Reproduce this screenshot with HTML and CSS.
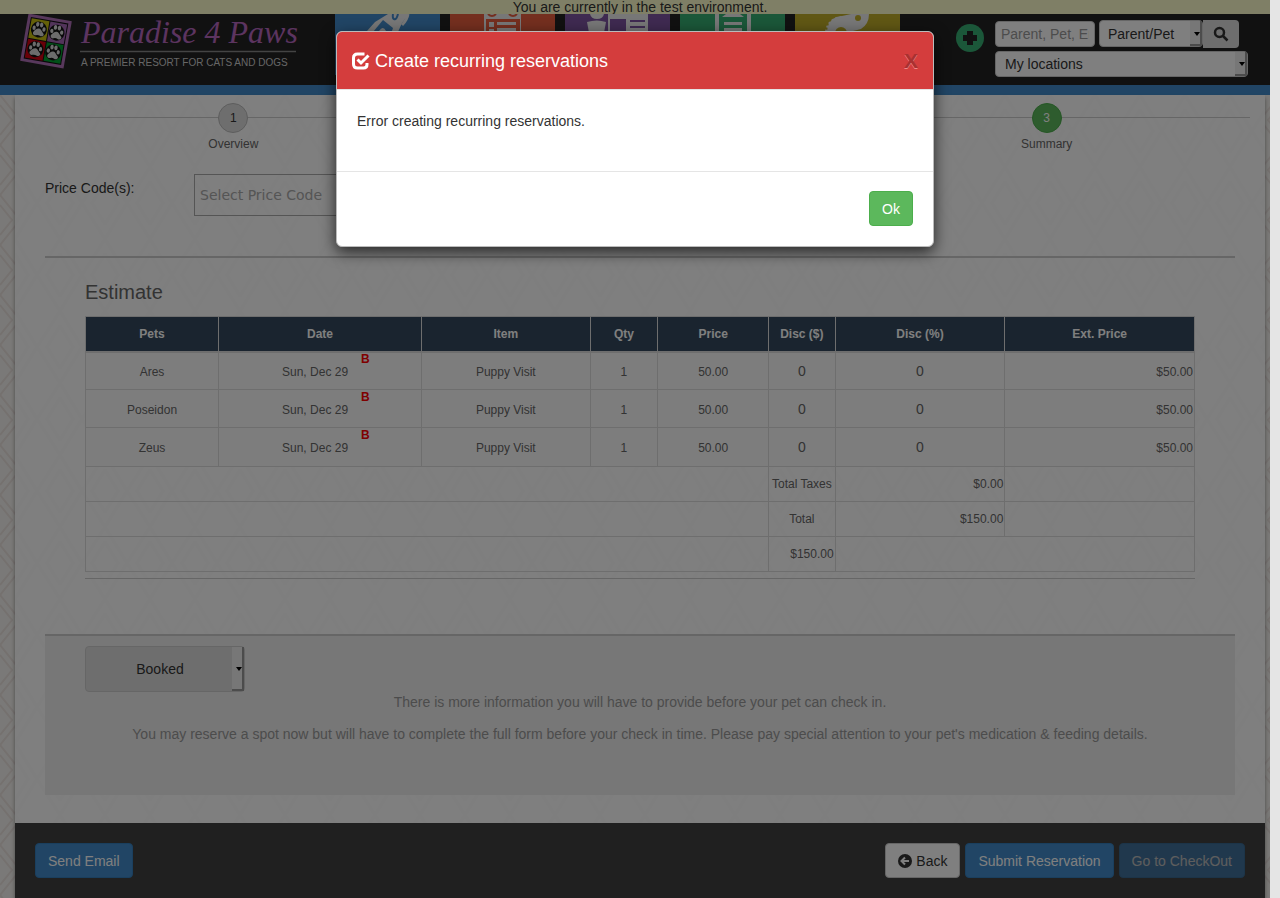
FILE: index.html
```html
<!DOCTYPE html>
<html lang="en">
<head>
<meta charset="utf-8">
<title>Paradise 4 Paws - Reservation</title>
<link rel="stylesheet" href="styles.css">
</head>
<body>
<div class="page">
  <div class="env-banner">You are currently in the test environment.</div>
  <header class="topbar">
    <a class="logo" href="#" aria-label="Paradise 4 Paws">
      <svg viewBox="0 0 300 62" width="300" height="62">
        <defs>
          <g id="paw" fill="#d8d8d8">
            <circle r="8" fill="#111"/>
            <path d="M0-1C2-1 3 1 5 3S4 7 2 6Q0 5-2 6C-4 7-6 5-5 3S-2-1 0-1Z"/>
            <ellipse cx="-5" cy="-1" rx="1.6" ry="2.2"/><ellipse cx="-2" cy="-5" rx="1.7" ry="2.4"/>
            <ellipse cx="2" cy="-5" rx="1.7" ry="2.4"/><ellipse cx="5" cy="-1" rx="1.6" ry="2.2"/>
          </g>
        </defs>
        <g transform="translate(26 27) rotate(10)">
          <rect x="-22" y="-24" width="44" height="48" fill="#b070b8"/>
          <rect x="-19" y="-21" width="38" height="42" fill="#111"/>
          <rect x="-18" y="-20" width="18" height="20" fill="#c8c010"/>
          <rect x="1" y="-20" width="17" height="20" fill="#a468b4"/>
          <rect x="-18" y="1" width="18" height="19" fill="#d00010"/>
          <rect x="1" y="1" width="17" height="19" fill="#00a030"/>
          <use href="#paw" x="-9" y="-10"/><use href="#paw" x="9" y="-10"/>
          <use href="#paw" x="-9" y="10"/><use href="#paw" x="9" y="10"/>
        </g>
        <text class="logo-name" x="61" y="29">Paradise 4 Paws</text>
        <path d="M60 37.500H276" stroke="#888" stroke-width="1.500"/>
        <text class="logo-tag" x="61" y="52">A PREMIER RESORT FOR CATS AND DOGS</text>
      </svg>
    </a>
    <nav class="tiles" aria-label="Main">
      <a class="tile tile-blue" href="#" aria-label="Check in"><svg viewBox="0 0 105 61">
        <path d="M32 17L40 8 53 0H74L67 9 62 20H32Z"/><path class="cut" d="M38 18L48 6 58 14 56 20H38Z"/>
        <path class="ring" d="M58 0C57 6 61 8 63 0"/>
        <path class="arc" d="M73 0Q72 6 67 11"/><path d="M44 17Q48 11 51 17V20H44Z"/></svg></a>
      <a class="tile tile-orange" href="#" aria-label="Calendar"><svg viewBox="0 0 105 61">
        <path d="M34 0H71V50H34Z"/><path class="ring" d="M38 0Q42 4 46 0M59 0Q63 4 67 0"/>
        <path class="cut" d="M36 5H70V48H36Z"/><path d="M39 8H44V13H39ZM47 8H66V11H47ZM47 14H66V17H47ZM39 15H44V20H39Z"/></svg></a>
      <a class="tile tile-purple" href="#" aria-label="Customers"><svg viewBox="0 0 105 61">
        <path d="M25 0H39Q38 5 32 5T25 0ZM22 8Q32 5 41 8L38 24H25ZM43 0H83V40H43Z"/>
        <path class="cut" d="M45 5H61V30H45ZM65 6H80V8H65ZM65 12H80V14H65Z"/></svg></a>
      <a class="tile tile-green" href="#" aria-label="Reports"><svg viewBox="0 0 105 61">
        <path d="M35 0H71V50H35Z"/><path class="cut" d="M39 0H67V46H39Z"/>
        <path d="M46 0H60L64 3H42ZM44 8H62V11H44ZM44 14H62V17H44Z"/></svg></a>
      <a class="tile tile-olive" href="#" aria-label="Settings"><svg viewBox="0 0 105 61">
        <circle class="teeth" cx="47" cy="19" r="15"/><path d="M32 20Q32 3 47 2L56 0H74Q74 10 66 15L58 17 50 20Z"/>
        <circle class="cut" cx="63" cy="4" r="3"/><circle class="cut" cx="46" cy="19" r="6"/></svg></a>
    </nav>
    <div class="tools">
      <button class="add" type="button" aria-label="Add">
        <svg viewBox="0 0 28 28"><path d="M11 7h6v4h4v6h-4v4h-6v-4H7v-6h4z"/></svg>
      </button>
      <form class="search">
        <div class="search-row">
          <input class="field query" type="text" placeholder="Parent, Pet, Email" aria-label="Search text">
          <span class="pick kind"><select class="field" aria-label="Search type"><option>Parent/Pet</option></select></span>
          <button class="go" type="button" aria-label="Search">
            <svg viewBox="0 0 16 16"><circle cx="6.500" cy="6.500" r="4.500"/><path d="M10 10l4.500 4.500"/></svg>
          </button>
        </div>
        <span class="pick place"><select class="field" aria-label="Location"><option>My locations</option></select></span>
      </form>
    </div>
  </header>

  <div class="backdrop-pattern">
  <main class="sheet">
    <ol class="steps">
      <li class="step"><span class="dot">1</span>Overview</li>
      <li class="step"><span class="dot">2</span>Details</li>
      <li class="step done"><span class="dot">3</span>Summary</li>
    </ol>

    <div class="price-code">
      <label for="code">Price Code(s):</label>
      <input id="code" type="text" placeholder="Select Price Code">
    </div>

    <section class="estimate">
      <h2>Estimate</h2>
      <table>
        <colgroup><col class="c-pets"><col class="c-date"><col class="c-item"><col class="c-qty"><col class="c-price"><col class="c-disc"><col class="c-pct"><col class="c-ext"></colgroup>
        <thead>
          <tr><th>Pets</th><th>Date</th><th>Item</th><th>Qty</th><th>Price</th><th>Disc ($)</th><th>Disc (%)</th><th>Ext. Price</th></tr>
        </thead>
        <tbody>
          <tr class="line"><td>Ares</td><td><span class="date">Sun, Dec 29<b>B</b></span></td><td>Puppy Visit</td><td>1</td><td>50.00</td><td class="num">0</td><td class="num">0</td><td class="money">$50.00</td></tr>
          <tr class="line"><td>Poseidon</td><td><span class="date">Sun, Dec 29<b>B</b></span></td><td>Puppy Visit</td><td>1</td><td>50.00</td><td class="num">0</td><td class="num">0</td><td class="money">$50.00</td></tr>
          <tr class="line last"><td>Zeus</td><td><span class="date">Sun, Dec 29<b>B</b></span></td><td>Puppy Visit</td><td>1</td><td>50.00</td><td class="num">0</td><td class="num">0</td><td class="money">$50.00</td></tr>
          <tr><td colspan="5"></td><td>Total Taxes</td><td class="money">$0.00</td><td></td></tr>
          <tr><td colspan="5"></td><td>Total</td><td class="money">$150.00</td><td></td></tr>
          <tr><td colspan="5"></td><td class="money">$150.00</td><td colspan="2"></td></tr>
        </tbody>
      </table>
    </section>

    <section class="notice">
      <span class="pick status"><select aria-label="Reservation status"><option>Booked</option></select></span>
      <p>There is more information you will have to provide before your pet can check in.</p>
      <p>You may reserve a spot now but will have to complete the full form before your check in time. Please pay special attention to your pet's medication &amp; feeding details.</p>
    </section>

    <footer class="actions">
      <button class="btn primary" type="button">Send Email</button>
      <div class="right">
        <button class="btn plain" type="button"><svg viewBox="0 0 14 14"><circle cx="7" cy="7" r="7"/><path d="M11 7H4M7 3.500L3.500 7 7 10.500"/></svg>Back</button>
        <button class="btn primary" type="button">Submit Reservation</button>
        <button class="btn primary faded" type="button">Go to CheckOut</button>
      </div>
    </footer>
  </main>
  </div>

  <div class="overlay">
    <div class="modal" role="dialog" aria-labelledby="modal-title">
      <div class="modal-head">
        <svg viewBox="0 0 18 18"><path class="box" d="M12.500 2H5.500Q1.500 2 1.500 6V12Q1.500 16 5.500 16H11.500Q15 16 15 12.500V11"/><path class="tick" d="M5.500 7.500L9 11 16.500 3.500"/></svg>
        <h1 id="modal-title">Create recurring reservations</h1>
        <button class="close" type="button">X</button>
      </div>
      <div class="modal-body">Error creating recurring reservations.</div>
      <div class="modal-foot"><button class="btn ok" type="button">Ok</button></div>
    </div>
  </div>
</div>
<div class="scrollbar"></div>
</body>
</html>
```
FILE: styles.css
```css
* { box-sizing: border-box; }
body {
  margin: 0;
  min-height: 100vh;
  display: grid;
  grid-template-columns: minmax(0, 1fr) 10px;
  font: 14px/20px "Liberation Sans", Arial, sans-serif;
  color: #333;
}
input, select, button { font: inherit; color: inherit; margin: 0; }
.page { position: relative; display: flex; flex-direction: column; }
.scrollbar { background: #e5e5e5; }

.env-banner {
  padding-left: 10px;
  background: #ffffcc;
  text-align: center;
  line-height: 14px;
}
.topbar {
  display: flex;
  align-items: flex-start;
  height: 81px;
  background: #222;
  border-bottom: 10px solid #428bca;
}
.logo { width: 315px; margin-left: 20px; flex: none; }
.logo svg { display: block; }
.logo-name { font: italic 32px "Liberation Serif", serif; fill: #b868c0; }
.logo-tag { font: 10px "Liberation Sans", sans-serif; fill: #ccc; }
.tiles { display: flex; gap: 10px; flex: none; }
.tile { width: 105px; height: 61px; background: var(--tint); }
.tile svg { display: block; fill: #eee; }
.tile .cut { fill: var(--tint); }
.tile .ring { fill: none; stroke: var(--tint); stroke-width: 2; }
.tile .arc { fill: none; stroke: #eee; stroke-width: 3; }
.tile .teeth { fill: none; stroke: #eee; stroke-width: 4; stroke-dasharray: 2 2; }
.tile-blue { --tint: #428bca; }
.tile-orange { --tint: #e95f3f; }
.tile-purple { --tint: #7f55a3; }
.tile-green { --tint: #37ae73; }
.tile-olive { --tint: #c0ae28; }

.tools { display: flex; gap: 11px; margin: 6px 22px 0 auto; }
.add {
  width: 28px; height: 28px; margin-top: 4px; padding: 0;
  border: 0; border-radius: 50%; background: #37ae73;
}
.add svg { display: block; fill: #222; }
.search { width: 253px; display: grid; gap: 3px; }
.search-row { display: flex; height: 28px; }
.field {
  width: 100%; height: 27px;
  padding: 0 8px;
  border: 1px solid #ccc; border-radius: 4px;
  background: #fff;
}
.query { width: 100px; height: 26px; margin: 1px 4px 0 0; padding: 0 5px; }
.query::placeholder { color: #999; }
.pick { position: relative; display: block; }
.pick select { appearance: none; display: block; }
.pick::after {
  content: "";
  position: absolute; top: 1px; right: 1px; bottom: 1px;
  width: 10px;
  border: solid #999; border-width: 0 2px 2px 0;
  background: #eee;
}
.pick::before {
  content: "";
  position: absolute; z-index: 1; top: 50%; right: 3px;
  margin-top: -2px;
  border: 3px solid transparent; border-top: 4px solid #000; border-bottom: 0;
}
.kind { width: 104px; height: 27px; }
.go {
  width: 36px; height: 28px; padding: 0;
  display: grid; place-items: center;
  border: 0; border-radius: 0 4px 4px 0; background: #ddd;
}
.go svg { width: 16px; height: 16px; fill: none; stroke: #333; stroke-width: 2.5; }
.place { height: 26px; }
.place .field { height: 26px; padding: 0 9px; }

.backdrop-pattern {
  flex: 1;
  display: flex;
  padding: 0 5px 0 15px;
  background: #f5f3f0 url("data:image/svg+xml,%3Csvg xmlns='http://www.w3.org/2000/svg' width='40' height='50'%3E%3Cpath d='M0 0L20 25 0 50M40 0L20 25 40 50M0 10L12 25 0 40M40 10L28 25 40 40' fill='none' stroke='%23eae2de' stroke-width='2'/%3E%3C/svg%3E");
}
.sheet {
  flex: 1;
  min-width: 0;
  display: flex;
  flex-direction: column;
  background: #fefefe url("data:image/svg+xml,%3Csvg xmlns='http://www.w3.org/2000/svg' width='45' height='72'%3E%3Cpath d='M0 0L22 36 0 72M45 0L22 36 45 72M0 15L13 36 0 57M45 15L32 36 45 57' fill='none' stroke='%23fcfcfc' stroke-width='3'/%3E%3C/svg%3E");
  box-shadow: 0 3px 4px rgba(0, 0, 0, 0.4);
}
.steps {
  display: grid; grid-template-columns: repeat(3, 1fr);
  margin: 0 15px; padding: 8px 0 0;
  list-style: none;
  background: linear-gradient(#ccc, #ccc) no-repeat 0 22px / 100% 1px;
}
.step { display: grid; justify-items: center; font-size: 12px; line-height: 22px; color: #666; }
.dot {
  width: 30px; height: 30px;
  border: 1px solid #bbb; border-radius: 15px;
  background: #ddd; color: #333;
  line-height: 28px; text-align: center;
}
.done .dot { background: #5cb85c; border-color: #4cae4c; color: #fff; }
.price-code {
  display: grid; grid-template-columns: 149px 400px;
  margin: 19px 30px 0; padding-bottom: 40px;
  border-bottom: 2px solid #ccc;
}
.price-code label { padding-top: 4px; }
.price-code input {
  height: 42px; padding: 0 5px;
  border: 1px solid #aaa; background: transparent;
  font-family: "DejaVu Sans", sans-serif;
}
.price-code input::placeholder { color: #aaa; }

.estimate {
  margin: 22px 70px 0; padding-bottom: 6px;
  border-bottom: 1px solid #ccc;
}
.estimate h2 { margin: 0 0 12px; font-size: 20px; line-height: 24px; font-weight: 400; color: #666; }
table { width: 100%; table-layout: fixed; border-collapse: collapse; font-size: 12px; color: #666; }
th, td { padding: 0 1px; border: 1px solid #ddd; text-align: center; }
th { height: 35px; background: #34495e; border-bottom: 2px solid #ddd; color: #fff; }
td { height: 35px; }
.line td { height: 38px; padding-top: 2px; background: #fbfbfb; }
.last td { height: 39px; }
.c-pets { width: 12%; } .c-date { width: 18.3%; } .c-item { width: 15.2%; } .c-qty { width: 6.1%; }
.c-price { width: 10%; } .c-disc { width: 6%; } .c-pct { width: 15.3%; } .c-ext { width: 17.1%; }
td.money { text-align: right; }
.line td.num { padding-top: 0; font-size: 14px; }
.date { position: relative; display: inline-block; left: -5px; }
.date b { position: absolute; left: 100%; top: -13px; margin-left: 13px; color: #f00; }

.notice {
  min-height: 161px;
  margin: 55px 30px 0; padding: 10px 40px;
  border-top: 2px solid #ccc;
  background: #eee;
  color: #999; text-align: center;
}
.status { width: 160px; color: #333; }
.status select {
  width: 100%; height: 46px; padding: 0 10px 0 0;
  border: 1px solid #ccc; border-radius: 4px; background: #ddd;
  text-align-last: center;
}
.notice p { margin: 0 0 12px; }
.actions {
  display: flex; justify-content: space-between; align-items: flex-start;
  margin-top: 28px; padding: 20px; flex: 1;
  background: #404040;
}
.right { display: flex; gap: 5px; }
.btn {
  height: 35px; padding: 0 12px;
  border: 1px solid transparent; border-radius: 4px;
}
.primary { background: #428bca; border-color: #357ebd; color: #fff; }
.faded { opacity: 0.65; }
.plain { display: flex; align-items: center; gap: 4px; background: #fff; border-color: #ccc; }
.plain svg { width: 14px; height: 14px; fill: #333; }
.plain path { fill: none; stroke: #fff; stroke-width: 2; }
.ok { background: #5cb85c; border-color: #4cae4c; color: #fff; }

.overlay {
  position: absolute; inset: 0; z-index: 5;
  padding: 31px 0;
  background: rgba(0, 0, 0, 0.5);
}
.modal {
  width: 598px; max-width: 100%; margin: 0 auto;
  border: 1px solid #bbb; border-radius: 6px;
  background: #fff;
  box-shadow: 0 5px 15px rgba(0, 0, 0, 0.7);
}
.modal-head {
  display: flex; align-items: center; gap: 5px;
  height: 58px; padding: 0 15px;
  background: #d43d3d; border-bottom: 1px solid #e5e5e5; border-radius: 5px 5px 0 0;
  color: #fff;
}
.modal-head svg { width: 18px; height: 18px; fill: none; stroke: #fff; stroke-width: 3; }
.modal-head h1 { margin: 0; font-size: 18px; font-weight: 400; }
.close {
  margin-left: auto; padding: 0; border: 0; background: none;
  font-size: 21px; font-weight: 700; color: #a93131; text-shadow: 0 1px 0 #e88;
}
.modal-body { min-height: 81px; padding: 21px 20px; }
.modal-foot {
  display: flex; justify-content: flex-end;
  padding: 19px 20px 20px; border-top: 1px solid #e5e5e5;
}
```
